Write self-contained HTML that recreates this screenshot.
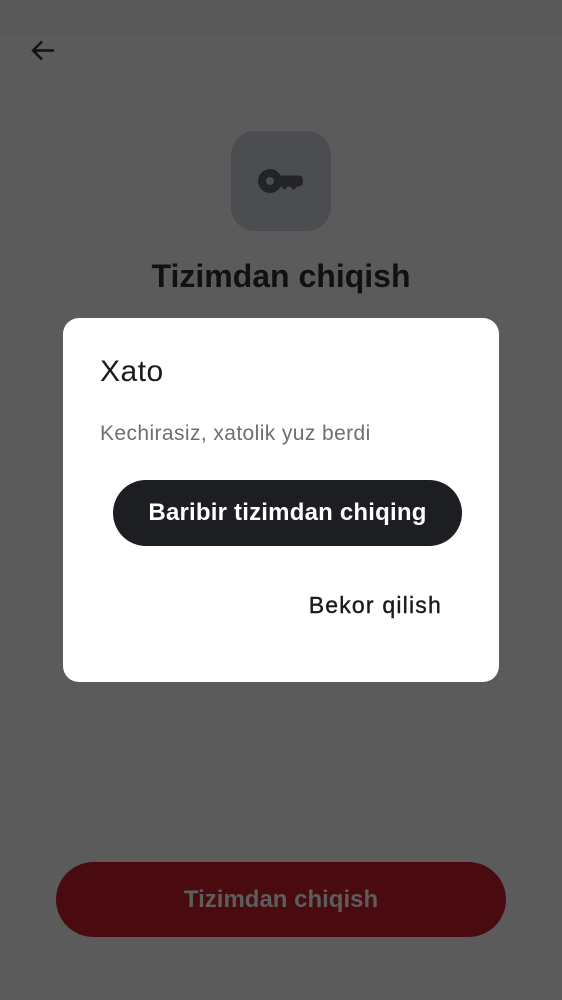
<!DOCTYPE html>
<html><head><meta charset="utf-8"><style>
*{margin:0;padding:0;box-sizing:border-box}
body{width:562px;height:1000px;background:#5b5b5b;position:relative;overflow:hidden;font-family:"Liberation Sans",sans-serif}
.abs{position:absolute}
</style></head><body>
<div class="abs" style="left:0;top:0;width:562px;height:36px;background:#595959"></div>
<svg class="abs" style="left:28px;top:36px" width="30" height="30" viewBox="0 0 30 30"><path d="M26 14.5H5M14 5.5L5 14.5L14 23.5" fill="none" stroke="#111" stroke-width="2.4"/></svg>
<div class="abs" style="left:231px;top:131px;width:100px;height:100px;border-radius:24px;background:#4c4d50"></div>
<svg class="abs" style="left:255px;top:165px" width="50" height="32" viewBox="0 0 50 32"><circle cx="15" cy="16" r="12" fill="#222427"/><circle cx="15" cy="16" r="4" fill="#4c4d50"/><path d="M24 10.5H44Q48 10.5 48 16Q48 21.5 44 21.5H42L38.5 25L35 21.5H33L29.5 25L26 21.5H24Z" fill="#222427"/></svg>
<div class="abs" style="left:0;width:562px;top:258px;text-align:center;font-size:32px;font-weight:bold;color:#111">Tizimdan chiqish</div>
<div class="abs" style="left:56px;top:862px;width:450px;height:75px;border-radius:38px;background:#490b10;color:#5d5d5d;font-size:24px;font-weight:bold;text-align:center;line-height:75px">Tizimdan chiqish</div>
<div class="abs" style="left:63px;top:318px;width:436px;height:364px;border-radius:16px;background:#fff">
<div class="abs" style="left:37px;top:37px;font-size:30px;color:#1a1a1a;letter-spacing:0.5px">Xato</div>
<div class="abs" style="left:37px;top:104px;font-size:21px;color:#6b6f76;letter-spacing:0.4px">Kechirasiz, xatolik yuz berdi</div>
<div class="abs" style="left:50px;top:162px;width:349px;height:66px;border-radius:33px;background:#1d1e22;color:#fff;font-size:24px;font-weight:bold;text-align:center;line-height:66px;letter-spacing:0.2px">Baribir tizimdan chiqing</div>
<div class="abs" style="right:57px;top:274px;font-size:23px;color:#1a1a1a;letter-spacing:1.2px;-webkit-text-stroke:0.4px #1a1a1a">Bekor qilish</div>
</div>
</body></html>
